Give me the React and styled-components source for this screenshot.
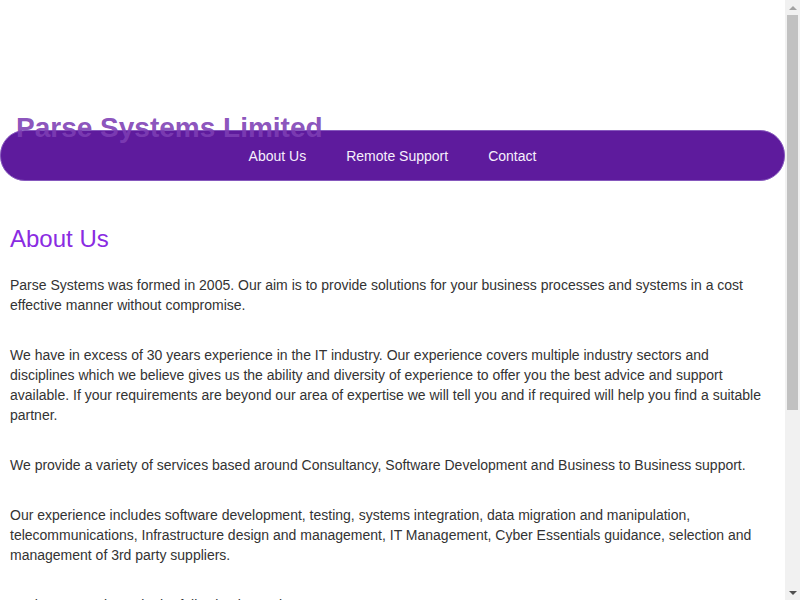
import styled, { createGlobalStyle } from 'styled-components';

const GlobalStyle = createGlobalStyle`
  html, body {
    margin: 0;
    padding: 0;
    background: #ffffff;
    font-family: 'Liberation Sans', Arial, sans-serif;
  }
  * {
    box-sizing: border-box;
  }
`;

const Frame = styled.div`
  display: flex;
  align-items: flex-start;
`;

const Page = styled.div`
  display: flex;
  flex-direction: column;
  flex: 1;
  min-width: 0;
`;

// stand-in for the browser's classic scrollbar seen in the screenshot
const ScrollTrack = styled.div`
  position: sticky;
  top: 0;
  display: flex;
  flex-direction: column;
  align-items: center;
  width: 15px;
  height: 100vh;
  background: #f1f1f1;
`;

const Arrow = styled.div`
  width: 15px;
  height: 15px;
  display: flex;
  align-items: center;
  justify-content: center;

  &::before {
    content: '';
    border-left: 4px solid transparent;
    border-right: 4px solid transparent;
    ${(p) =>
      p.down ? 'border-top: 4px solid #505050;' : 'border-bottom: 4px solid #a3a3a3;'}
  }
`;

const Thumb = styled.div`
  width: 11px;
  height: 395px;
  background: #c1c1c1;
`;

const Spacer = styled.div`
  flex: 1;
`;

const Header = styled.header`
  display: flex;
  flex-direction: column;
  padding-top: 112px;
`;

const Title = styled.h1`
  position: relative;
  z-index: 1;
  margin: 0 0 -14px 16px;
  font-size: 28px;
  line-height: 32px;
  font-weight: 700;
  color: rgba(125, 62, 180, 0.9);
`;

const Nav = styled.nav`
  display: flex;
  align-items: center;
  justify-content: center;
  gap: 40px;
  height: 51px;
  background: #5e1b9d;
  border: 1px solid #8658bd;
  border-radius: 25px;
`;

const NavLink = styled.a`
  font-size: 14px;
  color: #f6f0fc;
  text-decoration: none;
  cursor: pointer;
`;

const Main = styled.main`
  padding: 44px 10px 40px;
`;

const Heading = styled.h2`
  margin: 0 0 22px;
  font-size: 24px;
  font-weight: 400;
  line-height: 28px;
  color: #8a2be2;
`;

const Para = styled.p`
  margin: 0 0 30px;
  font-size: 14px;
  line-height: 20px;
  color: #333333;
`;

const List = styled.ul`
  margin: -10px 0 30px;
  padding-left: 30px;
  font-size: 14px;
  line-height: 20px;
  color: #333333;
`;

const points = [
  'Software Development',
  'Systems Integration',
  'Data Migration',
  'IT Management',
];

const App = () => {
  return (
    <>
      <GlobalStyle />
      <Frame>
        <Page>
          <Header>
            <Title>Parse Systems Limited</Title>
            <Nav>
              <NavLink>About Us</NavLink>
              <NavLink>Remote Support</NavLink>
              <NavLink>Contact</NavLink>
            </Nav>
          </Header>
          <Main>
            <Heading>About Us</Heading>
            <Para>
              Parse Systems was formed in 2005. Our aim is to provide solutions for your business
              processes and systems in a cost effective manner without compromise.
            </Para>
            <Para>
              We have in excess of 30 years experience in the IT industry. Our experience covers
              multiple industry sectors and disciplines which we believe gives us the ability and
              diversity of experience to offer you the best advice and support available. If your
              requirements are beyond our area of expertise we will tell you and if required will
              help you find a suitable partner.
            </Para>
            <Para>
              We provide a variety of services based around Consultancy, Software Development and
              Business to Business support.
            </Para>
            <Para>
              Our experience includes software development, testing, systems integration, data
              migration and manipulation, telecommunications, Infrastructure design and management,
              IT Management, Cyber Essentials guidance, selection and management of 3rd party
              suppliers.
            </Para>
            <Para>We have experience in the following key points:</Para>
            <List>
              {points.map((p) => (
                <li key={p}>{p}</li>
              ))}
            </List>
          </Main>
        </Page>
        <ScrollTrack>
          <Arrow />
          <Thumb />
          <Spacer />
          <Arrow down />
        </ScrollTrack>
      </Frame>
    </>
  );
};

export default App;
